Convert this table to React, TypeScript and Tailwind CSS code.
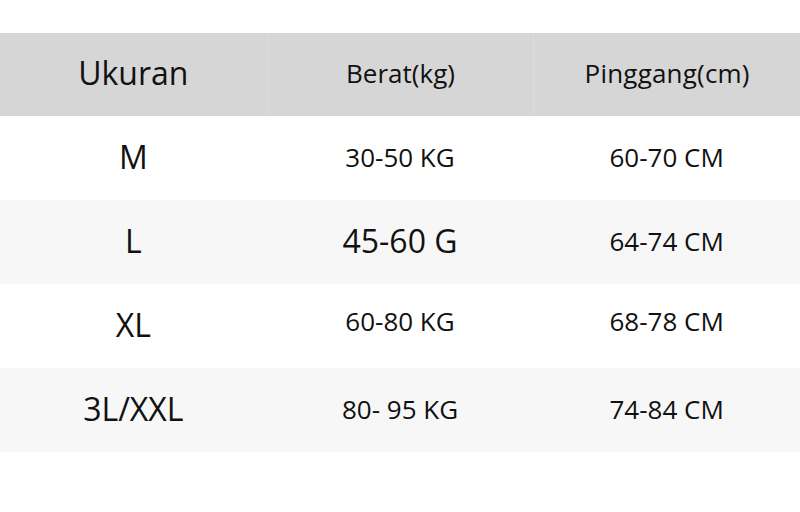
const rows = [
  { size: "M", weight: "30-50 KG", waist: "60-70 CM", big: false, lift: "pb-[2px]" },
  { size: "L", weight: "45-60 G", waist: "64-74 CM", big: true, lift: "pb-[2px]" },
  { size: "XL", weight: "60-80 KG", waist: "68-78 CM", big: false, lift: "pb-[9px]" },
  { size: "3L/XXL", weight: "80- 95 KG", waist: "74-84 CM", big: false, lift: "pb-[2px]" },
];

export default function App() {
  return (
    <div
      className="w-[800px] h-[512px] bg-white pt-[33px] text-[#111]"
      style={{ fontFamily: '"Open Sans", "Noto Sans", sans-serif' }}
    >
      <div className="grid grid-cols-3 h-[83px] bg-[#d6d6d6]">
        <div className="flex items-center justify-center pb-[4px] text-[32px]">Ukuran</div>
        <div className="flex items-center justify-center pb-[3px] text-[26px] border-l border-[#dcdcdc]">Berat(kg)</div>
        <div className="flex items-center justify-center pb-[3px] text-[26px] tracking-[0.2px] border-l border-[#dcdcdc]">Pinggang(cm)</div>
      </div>
      {rows.map((r, i) => (
        <div key={r.size} className={`grid grid-cols-3 h-[84px] ${i % 2 === 1 ? "bg-[#f7f7f7]" : "bg-white"}`}>
          <div className="flex items-center justify-center pb-[2px] text-[32px]">{r.size}</div>
          <div className={`flex items-center justify-center ${r.lift} ${r.big ? "text-[32px]" : "text-[26px]"}`}>{r.weight}</div>
          <div className={`flex items-center justify-center ${r.lift} text-[26px]`}>{r.waist}</div>
        </div>
      ))}
    </div>
  );
}
